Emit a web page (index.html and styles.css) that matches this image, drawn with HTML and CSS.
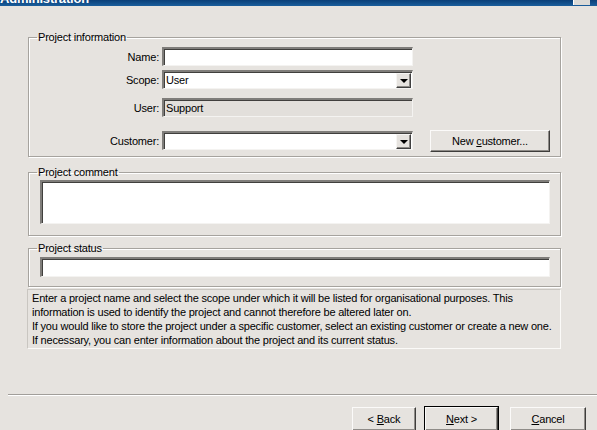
FILE: index.html
```html
<!DOCTYPE html>
<html>
<head>
<meta charset="utf-8">
<link rel="stylesheet" href="styles.css">
</head>
<body>
<div class="window">
  <div class="titlebar">
    <span class="title">Administration</span>
    <span class="close"></span>
  </div>
  <div class="content">
    <fieldset class="group g-info">
      <legend>Project information</legend>
      <div class="row row-name">
        <span class="lbl">Name:</span>
        <div class="field"></div>
      </div>
      <div class="row row-scope">
        <span class="lbl">Scope:</span>
        <div class="field combo"><span class="val">User</span><span class="drop"><span class="tri"></span></span></div>
      </div>
      <div class="row row-user">
        <span class="lbl">User:</span>
        <div class="field disabled"><span class="val">Support</span></div>
      </div>
      <div class="row row-cust">
        <span class="lbl">Customer:</span>
        <div class="field combo"><span class="val"></span><span class="drop"><span class="tri"></span></span></div>
        <div class="btn btn-new"><span>New <u>c</u>ustomer...</span></div>
      </div>
    </fieldset>

    <fieldset class="group g-comment">
      <legend>Project comment</legend>
      <div class="field area"></div>
    </fieldset>

    <fieldset class="group g-status">
      <legend>Project status</legend>
      <div class="field status"></div>
    </fieldset>

    <div class="hint">Enter a project name and select the scope under which it will be listed for organisational purposes. This<br>information is used to identify the project and cannot therefore be altered later on.<br>If you would like to store the project under a specific customer, select an existing customer or create a new one.<br>If necessary, you can enter information about the project and its current status.</div>
  </div>

  <div class="separator"></div>

  <div class="buttons">
    <div class="btn btn-back"><span>&lt; <u>B</u>ack</span></div>
    <div class="btn btn-next"><span><u>N</u>ext &gt;</span></div>
    <div class="btn btn-cancel"><span><u>C</u>ancel</span></div>
  </div>
</div>
</body>
</html>
```

FILE: styles.css
```css
html, body {
  margin: 0;
  padding: 0;
  background: #e6e3df;
  overflow: hidden;
}
body {
  width: 597px;
  height: 430px;
  font-family: "Liberation Sans", Arial, sans-serif;
  font-size: 11px;
  letter-spacing: -0.2px;
  color: #000;
}
.window {
  width: 597px;
  height: 430px;
  overflow: hidden;
}
.titlebar {
  height: 6px;
  background: linear-gradient(to bottom, #0a3f78, #1a5e9c);
  overflow: hidden;
  display: flex;
  justify-content: space-between;
}
.title {
  color: #fff;
  font-weight: bold;
  font-size: 13px;
  line-height: 13px;
  margin-top: -8px;
}
.close {
  width: 16px;
  height: 5px;
  margin-right: 7px;
  background: #dcdad6;
  border-left: 1px solid #fff;
}
.content {
  padding: 0 0 0 28px;
}
.group {
  margin: 0;
  padding: 0;
  border: 1px solid #a6a39e;
  box-shadow: 1px 1px 0 #fff, inset 1px 1px 0 #fff;
  width: 533px;
  box-sizing: border-box;
  min-inline-size: 0;
}
.group legend {
  padding: 0 1px;
  margin-left: 8px;
  line-height: 13px;
}
.g-info {
  margin-top: 25px;
  height: 126px;
  padding-top: 3px;
}
.row {
  display: flex;
  align-items: center;
  height: 19px;
}
.lbl {
  width: 130px;
  text-align: right;
  margin-right: 3px;
}
.row-scope { margin-top: 4px; }
.row-user { margin-top: 9px; }
.row-cust { margin-top: 14px; }

.field {
  width: 251px;
  height: 19px;
  box-sizing: border-box;
  background: #fff;
  border-top: 2px solid #7f7d7a;
  border-left: 2px solid #7f7d7a;
  border-bottom: 1px solid #f4f3f1;
  border-right: 1px solid #f4f3f1;
  box-shadow: inset 1px 1px 0 #403f3d;
  display: flex;
  align-items: center;
}
.field .val {
  padding-left: 2px;
  flex: 1;
}
.field.disabled {
  background: #e2dfdb;
}
.drop {
  width: 15px;
  height: 15px;
  margin-right: 1px;
  box-sizing: border-box;
  background: #e6e3df;
  border-top: 1px solid #f6f5f3;
  border-left: 1px solid #f6f5f3;
  border-right: 1px solid #404040;
  border-bottom: 1px solid #404040;
  box-shadow: inset -1px -1px 0 #8c8a86;
  display: flex;
  align-items: center;
  justify-content: center;
}
.tri {
  width: 0;
  height: 0;
  border-left: 4px solid transparent;
  border-right: 4px solid transparent;
  border-top: 4px solid #000;
  margin-top: 1px;
}
.btn {
  box-sizing: border-box;
  height: 22px;
  display: flex;
  align-items: center;
  justify-content: center;
  background: #e6e3df;
  border-top: 1px solid #fbfaf9;
  border-left: 1px solid #fbfaf9;
  border-right: 1px solid #3e3d3b;
  border-bottom: 1px solid #3e3d3b;
  box-shadow: inset -1px -1px 0 #8f8c88;
  white-space: pre;
}
.btn-new {
  width: 120px;
  margin-left: 17px;
}
.g-comment {
  margin-top: 9px;
  height: 70px;
  padding: 1px 0 0 0;
}
.area {
  width: 510px;
  height: 44px;
  margin-left: 11px;
}
.g-status {
  margin-top: 6px;
  height: 45px;
  padding: 2px 0 0 0;
}
.status {
  width: 510px;
  height: 20px;
  margin-left: 11px;
}
.hint {
  margin-top: 2px;
  width: 534px;
  margin-left: -1px;
  box-sizing: border-box;
  height: 60px;
  padding: 1px 0 0 4px;
  line-height: 14px;
  border-top: 1px solid #c9c6c1;
  border-left: 1px solid #c9c6c1;
  border-bottom: 1px solid #fbfaf8;
  border-right: 1px solid #fbfaf8;
  white-space: nowrap;
}
.separator {
  margin: 45px 0 0 8px;
  height: 1px;
  background: #a19e9a;
  border-bottom: 1px solid #fff;
}
.buttons {
  display: flex;
  margin: 11px 0 0 352px;
}
.btn-back { width: 64px; height: 24px; }
.btn-next {
  width: 73px;
  height: 24px;
  margin-left: 9px;
  outline: 1px solid #000;
}
.btn-cancel { width: 76px; height: 24px; margin-left: 12px; }
```
